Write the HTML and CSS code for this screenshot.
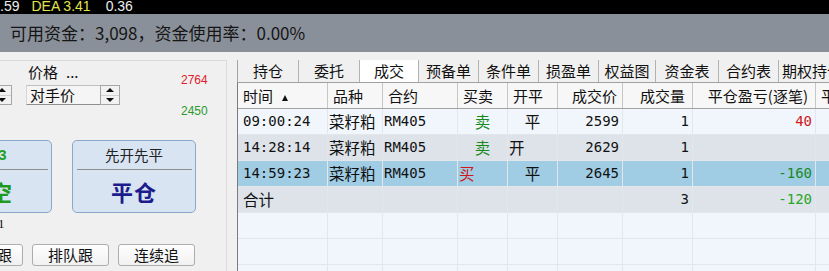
FILE: index.html
```html
<!DOCTYPE html>
<html>
<head>
<meta charset="utf-8">
<title>成交</title>
<link rel="stylesheet" href="styles.css">
</head>
<body>
<div class="ticker">
    <span>.59</span>
    <span class="dea">DEA 3.41</span>
    <span class="last">0.36</span>
</div>
<div class="fund-bar">可用资金：3,098，资金使用率：0.00%</div>

<div class="main">
    <div class="order-panel">
        <div class="price-area">
            <div class="price-col">
                <div class="price-label">价格<span class="dots">...</span></div>
                <div class="spin-row">
                    <div class="spinner"><div class="half"><i class="up"></i></div><div class="half"><i class="down"></i></div></div>
                    <div class="price-box">对手价</div>
                    <div class="spinner"><div class="half"><i class="up"></i></div><div class="half"><i class="down"></i></div></div>
                </div>
            </div>
            <div class="quote-col">
                <span class="ask">2764</span>
                <span class="bid">2450</span>
            </div>
        </div>

        <div class="big-buttons">
            <div class="big-btn sell">
                <div class="big-top">2763</div>
                <div class="big-main">卖空</div>
            </div>
            <div class="big-btn">
                <div class="big-top">先开先平</div>
                <div class="big-main">平仓</div>
            </div>
        </div>

        <div class="qty-row">1</div>

        <div class="small-buttons">
            <div class="small-btn first">对价跟</div>
            <div class="small-btn">排队跟</div>
            <div class="small-btn">连续追</div>
        </div>
    </div>

    <div class="trade-area">
        <div class="tabs">
            <div class="tab">持仓</div>
            <div class="tab">委托</div>
            <div class="tab active">成交</div>
            <div class="tab">预备单</div>
            <div class="tab">条件单</div>
            <div class="tab">损盈单</div>
            <div class="tab">权益图</div>
            <div class="tab">资金表</div>
            <div class="tab">合约表</div>
            <div class="tab">期权持仓</div>
        </div>

        <div class="grid">
            <div class="row head">
                <div class="cell">时间<i class="sort"></i></div>
                <div class="cell">品种</div>
                <div class="cell">合约</div>
                <div class="cell">买卖</div>
                <div class="cell">开平</div>
                <div class="cell right">成交价</div>
                <div class="cell right wide">成交量</div>
                <div class="cell right wide">平仓盈亏(逐笔)</div>
                <div class="cell">平仓盈亏</div>
            </div>

            <div class="row light">
                <div class="cell mono">09:00:24</div>
                <div class="cell cn tight">菜籽粕</div>
                <div class="cell mono tight">RM405</div>
                <div class="cell cn mid green">卖</div>
                <div class="cell cn mid">平</div>
                <div class="cell mono num">2599</div>
                <div class="cell mono num">1</div>
                <div class="cell mono num red">40</div>
                <div class="cell"></div>
            </div>
            <div class="row gray">
                <div class="cell mono">14:28:14</div>
                <div class="cell cn tight">菜籽粕</div>
                <div class="cell mono tight">RM405</div>
                <div class="cell cn mid green">卖</div>
                <div class="cell cn tight">开</div>
                <div class="cell mono num">2629</div>
                <div class="cell mono num">1</div>
                <div class="cell mono num"></div>
                <div class="cell"></div>
            </div>
            <div class="row selected">
                <div class="cell mono">14:59:23</div>
                <div class="cell cn tight">菜籽粕</div>
                <div class="cell mono tight">RM405</div>
                <div class="cell cn tight red">买</div>
                <div class="cell cn mid">平</div>
                <div class="cell mono num">2645</div>
                <div class="cell mono num">1</div>
                <div class="cell mono num green">-160</div>
                <div class="cell"></div>
            </div>
            <div class="row gray">
                <div class="cell cn">合计</div>
                <div class="cell"></div>
                <div class="cell"></div>
                <div class="cell"></div>
                <div class="cell"></div>
                <div class="cell"></div>
                <div class="cell mono num">3</div>
                <div class="cell mono num lime">-120</div>
                <div class="cell"></div>
            </div>
            <div class="row light">
                <div class="cell"></div><div class="cell"></div><div class="cell"></div>
                <div class="cell"></div><div class="cell"></div><div class="cell"></div>
                <div class="cell"></div><div class="cell"></div><div class="cell"></div>
            </div>
            <div class="row light">
                <div class="cell"></div><div class="cell"></div><div class="cell"></div>
                <div class="cell"></div><div class="cell"></div><div class="cell"></div>
                <div class="cell"></div><div class="cell"></div><div class="cell"></div>
            </div>
            <div class="row light">
                <div class="cell"></div><div class="cell"></div><div class="cell"></div>
                <div class="cell"></div><div class="cell"></div><div class="cell"></div>
                <div class="cell"></div><div class="cell"></div><div class="cell"></div>
            </div>
        </div>
    </div>
</div>
</body>
</html>
```

FILE: styles.css
```css
body {
    margin: 0;
    width: 829px;
    height: 271px;
    overflow: hidden;
    background: #f0f0f0;
    font-family: "Noto Sans CJK SC", sans-serif;
    color: #111;
}

/* top quote strip */
.ticker {
    height: 14px;
    background: #000;
    color: #eeeeee;
    font-family: "Liberation Sans", sans-serif;
    font-size: 14px;
    line-height: 12px;
    display: flex;
    white-space: nowrap;
    overflow: hidden;
}

.ticker .dea {
    margin-left: 12px;
    color: #e4e44c;
}

.ticker .last {
    margin-left: 15px;
}

.fund-bar {
    height: 38px;
    background: #8a9099;
    padding-left: 10px;
    font-size: 17px;
    line-height: 38px;
    color: #151515;
    white-space: nowrap;
}

.main {
    display: flex;
    margin-top: 8px;
    height: 211px;
}

/* left order panel */
.order-panel {
    flex: none;
    width: 227px;
    box-sizing: border-box;
    border-top: 1px solid #dadada;
    border-right: 1px solid #dadada;
    overflow: hidden;
}

.price-area {
    display: flex;
    height: 79px;
}

.price-col {
    flex: none;
    width: 181px;
}

.price-label {
    margin-top: 1px;
    padding-left: 28px;
    font-size: 15px;
    line-height: 20px;
}

.price-label .dots {
    margin-left: 8px;
}

.spin-row {
    display: flex;
    height: 20px;
    margin-top: 3px;
    margin-left: -8px;
}

.spinner {
    flex: none;
    width: 20px;
    height: 20px;
    box-sizing: border-box;
    border: 1px solid #a6a6a6;
    background: #f2f2f2;
    display: flex;
    flex-direction: column;
}

.spinner .half {
    flex: 1;
    display: flex;
    align-items: center;
    justify-content: center;
}

.spinner .half:first-child {
    border-bottom: 1px solid #d2d2d2;
}

.spinner .up {
    border-left: 4px solid transparent;
    border-right: 4px solid transparent;
    border-bottom: 4px solid #111;
}

.spinner .down {
    border-left: 4px solid transparent;
    border-right: 4px solid transparent;
    border-top: 4px solid #111;
}

.price-box {
    flex: none;
    width: 74px;
    height: 20px;
    box-sizing: border-box;
    margin-left: 14px;
    padding-left: 3px;
    border-top: 1px solid #c0c0c0;
    border-left: 1px solid #d6d6d6;
    border-bottom: 1px solid #8e8e8e;
    background: #f5f5f5;
    font-size: 15px;
    line-height: 17px;
}

.quote-col {
    display: flex;
    flex-direction: column;
    gap: 15px;
    margin-top: 11px;
    font-family: "Liberation Sans", sans-serif;
    font-size: 12px;
    line-height: 16px;
}

.ask { color: #e0202c; }
.bid { color: #2e9a2e; }

.big-buttons {
    display: flex;
    gap: 20px;
    margin-left: -72px;
    height: 73px;
}

.big-btn {
    flex: none;
    width: 124px;
    height: 73px;
    box-sizing: border-box;
    border: 1px solid #8aa9ca;
    border-radius: 5px;
    background: #d8e4f2;
    display: flex;
    flex-direction: column;
    align-items: center;
}

.big-top {
    width: 115px;
    height: 28px;
    border-bottom: 1px solid #8e8e8e;
    text-align: center;
    font-size: 14.5px;
    line-height: 28px;
    color: #222;
}

.big-main {
    flex: 1;
    display: flex;
    align-items: center;
    justify-content: center;
    font-size: 22px;
    font-weight: 700;
    color: #1c1c8c;
    letter-spacing: 1px;
}

.big-btn.sell .big-top {
    font-family: "Liberation Sans", sans-serif;
    font-weight: 700;
    font-size: 15px;
    color: #22a022;
}

.big-btn.sell .big-main {
    color: #1e9a1e;
}

.qty-row {
    padding-top: 3px;
    margin-left: -2px;
    font-family: "Liberation Serif", serif;
    font-size: 13px;
    line-height: 16px;
}

.small-buttons {
    display: flex;
    gap: 9px;
    margin-top: 12px;
    margin-left: -54px;
}

.small-btn {
    flex: none;
    width: 77px;
    height: 22px;
    box-sizing: border-box;
    border: 1px solid #adadad;
    border-radius: 3px;
    background: linear-gradient(#fefefe, #f1f1f1);
    font-size: 15px;
    line-height: 20px;
    text-align: center;
    color: #111;
}

.small-btn.first {
    text-align: right;
    padding-right: 10px;
}

/* right trade area */
.trade-area {
    flex: 1;
    min-width: 0;
    margin-left: 10px;
    overflow: hidden;
}

.tabs {
    display: flex;
    height: 22px;
    border-left: 1px solid #a4a4a4;
}

.tab {
    flex: none;
    width: 60px;
    box-sizing: border-box;
    border-right: 1px solid #b2b2b2;
    text-align: center;
    font-size: 15px;
    line-height: 22px;
    white-space: nowrap;
}

.tab:nth-child(1),
.tab:nth-child(2) { width: 61px; }
.tab:nth-child(3) { width: 59px; }
.tab:nth-child(7) { width: 57px; }
.tab:nth-child(8) { width: 63px; }
.tab:last-child { width: 80px; text-align: left; padding-left: 3px; border-right: none; }

.tab.active {
    background: #fff;
}

.grid {
    border-top: 1px solid #a0a0a0;
    border-left: 1px solid #7c7c7c;
}

.row {
    display: grid;
    grid-template-columns: 90px 55px 75px 50px 50px 65px 70px 123px 100px;
    height: 26px;
    box-sizing: border-box;
    border-bottom: 1px solid #e3e7ec;
    line-height: 25px;
}

.cell {
    box-sizing: border-box;
    padding: 0 5px;
    border-right: 1px solid #e3e7ec;
    white-space: nowrap;
    overflow: hidden;
}

.row.head {
    background: #f7f7f7;
    border-bottom-color: #a2a2a2;
    font-size: 15px;
}

.row.head .cell {
    border-right-color: #c6c6c6;
}

.row.head .right { text-align: right; }
.row.head .wide { padding-right: 7px; }

.sort {
    display: inline-block;
    margin-left: 9px;
    vertical-align: 1px;
    border-left: 3.5px solid transparent;
    border-right: 3.5px solid transparent;
    border-bottom: 6px solid #111;
}

.row.light { background: #f1f6fc; }
.row.gray { background: #dee3ea; }
.row.selected { background: #a0cce4; }

.mono {
    font-family: "DejaVu Sans Mono", monospace;
    font-size: 14px;
}

.cn {
    font-size: 15.5px;
}

.tight { padding-left: 1px; }
.mid { text-align: center; }
.num { text-align: right; padding-right: 3px; }

.red { color: #d01818; }
.green { color: #17891f; }
.lime { color: #26a626; }
```
